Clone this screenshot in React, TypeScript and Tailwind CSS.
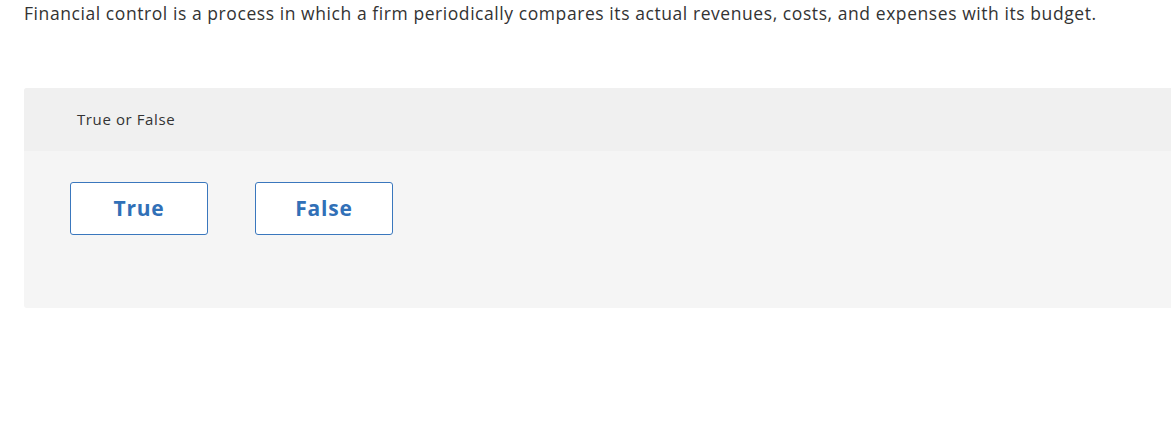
import React from 'react';

const FONT = { fontFamily: '"Open Sans", "Liberation Sans", sans-serif' };

function ChoiceButton({ label }: { label: string }) {
  return (
    <button
      type="button"
      className="w-[138px] h-[53px] bg-white border border-[#3a77bd] rounded-[3px] text-[21px] font-bold tracking-[0.8px] text-[#3170b7] leading-none"
    >
      {label}
    </button>
  );
}

export default function App() {
  return (
    <div className="w-full min-h-screen bg-white overflow-hidden" style={FONT}>
      <p className="pl-6 pt-[1px] text-[17.5px] tracking-[0.57px] leading-[24px] text-[#333]">
        Financial control is a process in which a firm periodically compares its actual revenues, costs, and expenses with its budget.
      </p>

      <div className="ml-6 -mr-6 mt-[63px] rounded-[3px] overflow-hidden bg-[#f5f5f5]">
        {/* Header */}
        <div className="h-[63px] bg-[#f0f0f0] flex items-center pl-[53px] text-[15px] tracking-[0.6px] text-[#333]">
          True or False
        </div>

        {/* Choices */}
        <div className="h-[157px] pl-[46px] pt-[31px] flex items-start gap-[47px]">
          <ChoiceButton label="True" />
          <ChoiceButton label="False" />
        </div>
      </div>
    </div>
  );
}
